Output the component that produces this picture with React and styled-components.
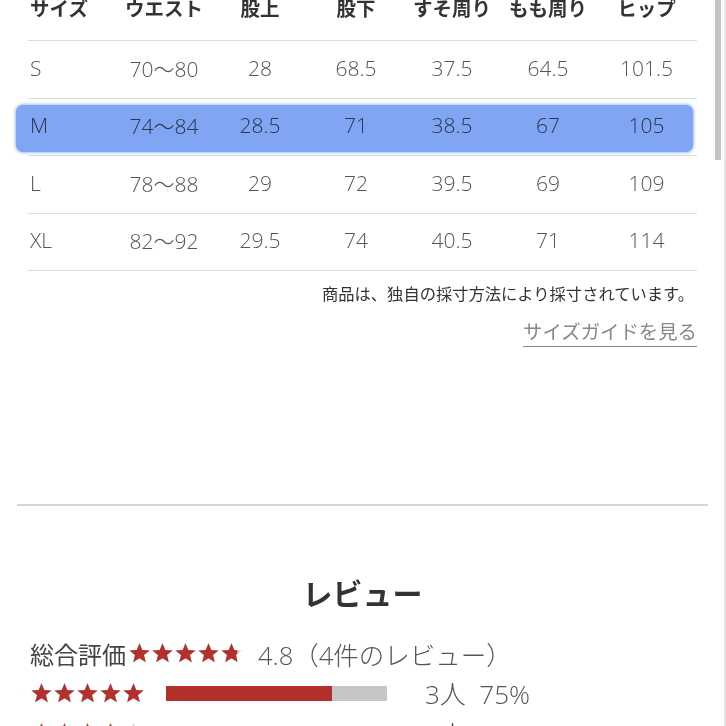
import React from "react";
import styled, { createGlobalStyle } from "styled-components";

const GlobalStyle = createGlobalStyle`
  html, body { margin: 0; padding: 0; background: #fff; }
  body { overflow: hidden; font-family: "Open Sans", "Noto Sans CJK JP", sans-serif; }
`;

const Page = styled.div`
  position: relative;
  width: 726px;
  height: 726px;
  overflow: hidden;
  background: #fff;
`;

const ScrollTrack = styled.div`
  position: absolute;
  top: 0;
  right: 0;
  width: 2px;
  height: 100%;
  background: #e6e6e6;
`;

const ScrollThumb = styled.div`
  position: absolute;
  top: 0;
  right: 5px;
  width: 6px;
  height: 160px;
  background: #c4c4c4;
`;

const Content = styled.div`
  padding: 0 29px 0 28px;
`;

const Table = styled.div`
  margin-top: -16.5px;
`;

const Row = styled.div`
  position: relative;
  display: grid;
  grid-template-columns: 88px repeat(5, 96px) 1fr;
  align-items: center;
  height: 56.5px;
  border-bottom: 1px solid #dcdcdc;
`;

const HeadCell = styled.div`
  font-family: "Noto Sans CJK JP", sans-serif;
  font-weight: 700;
  font-size: 19.5px;
  color: #333;
  text-align: ${(p) => (p.$first ? "left" : "center")};
  padding-left: ${(p) => (p.$first ? "2px" : "0")};
  padding-bottom: 8px;
  white-space: nowrap;
`;

const Cell = styled.div`
  font-family: "Open Sans", "Noto Sans CJK JP", sans-serif;
  font-weight: 300;
  font-size: 21px;
  color: #555;
  text-align: ${(p) => (p.$first ? "left" : "center")};
  padding-left: ${(p) => (p.$first ? "2px" : "0")};
  padding-bottom: 3px;
  white-space: nowrap;
`;

const Marker = styled.div`
  position: absolute;
  left: -12px;
  right: 4px;
  top: 6px;
  bottom: 3px;
  border-radius: 7px;
  background: #80a5f2;
  box-shadow: 0 0 3px 1px rgba(127, 164, 242, 0.7);
  mix-blend-mode: multiply;
  pointer-events: none;
`;

const Note = styled.p`
  margin: 10px 3px 0 0;
  text-align: right;
  font-family: "Noto Sans CJK JP", sans-serif;
  font-size: 16.3px;
  line-height: 24px;
  color: #333;
`;

const GuideLink = styled.a`
  display: block;
  margin-top: 12px;
  text-align: right;
  font-family: "Noto Sans CJK JP", sans-serif;
  font-size: 19.4px;
  line-height: 28px;
  color: #888;
  text-decoration: underline;
  text-underline-offset: 7px;
  text-decoration-thickness: 1px;
`;

const Divider = styled.hr`
  margin: 159px -11px 0 -11px;
  border: none;
  height: 2px;
  background: #d6d6d6;
`;

const Title = styled.h2`
  margin: 66px 0 0;
  text-align: center;
  font-family: "Noto Sans CJK JP", sans-serif;
  font-weight: 700;
  font-size: 30px;
  line-height: 40px;
  color: #333;
`;

const Summary = styled.div`
  display: flex;
  align-items: center;
  margin-top: 25px;
  padding-left: 2px;
  height: 32px;
`;

const Label = styled.span`
  font-family: "Noto Sans CJK JP", sans-serif;
  font-size: 24px;
  color: #444;
  margin-right: 2px;
`;

const Score = styled.span`
  font-family: "Open Sans", "Noto Sans CJK JP", sans-serif;
  font-weight: 300;
  font-size: 25.5px;
  color: #555;
  margin-left: 15px;
  white-space: nowrap;
`;

const Stars = styled.div`
  display: flex;
`;

const DistRow = styled.div`
  display: flex;
  align-items: center;
  height: 32px;
  margin-top: 8px;
  padding-left: 2px;
`;

const Bar = styled.div`
  width: 221px;
  height: 15px;
  background: #c6c6c6;
  margin-left: 21px;
  margin-right: 38px;
`;

const BarFill = styled.div`
  height: 100%;
  background: #b3302c;
`;

const Count = styled.span`
  font-family: "Open Sans", "Noto Sans CJK JP", sans-serif;
  font-weight: 300;
  font-size: 26px;
  color: #555;
  white-space: pre;
`;

const STAR =
  "M11.5 1.2l2.8 6.7 7.3.5-5.6 4.7 1.8 7.1-6.3-3.9-6.3 3.9 1.8-7.1L1.4 8.4l7.3-.5z";

function Star({ fill = 1, id }) {
  return (
    <svg width="23" height="22" viewBox="0 0 23 22">
      <defs>
        <clipPath id={id}>
          <rect x="0" y="0" width={23 * fill} height="22" />
        </clipPath>
      </defs>
      <path d={STAR} fill="#cfcfcf" />
      <path d={STAR} fill="#b3302c" clipPath={`url(#${id})`} />
    </svg>
  );
}

function StarRow({ value, prefix }) {
  return (
    <Stars>
      {[0, 1, 2, 3, 4].map((i) => (
        <Star key={i} id={`${prefix}-${i}`} fill={Math.max(0, Math.min(1, value - i))} />
      ))}
    </Stars>
  );
}

const headers = ["サイズ", "ウエスト", "股上", "股下", "すそ周り", "もも周り", "ヒップ"];
const rows = [
  ["S", "70〜80", "28", "68.5", "37.5", "64.5", "101.5"],
  ["M", "74〜84", "28.5", "71", "38.5", "67", "105"],
  ["L", "78〜88", "29", "72", "39.5", "69", "109"],
  ["XL", "82〜92", "29.5", "74", "40.5", "71", "114"],
];

const dist = [
  { stars: 5, count: "3人", pct: 75 },
  { stars: 4, count: "1人", pct: 25 },
];

export default function App() {
  return (
    <Page>
      <GlobalStyle />
      <Content>
        <Table>
          <Row>
            {headers.map((h, i) => (
              <HeadCell key={h} $first={i === 0}>
                {h}
              </HeadCell>
            ))}
          </Row>
          {rows.map((r) => (
            <Row key={r[0]}>
              {r.map((v, i) => (
                <Cell key={i} $first={i === 0}>
                  {v}
                </Cell>
              ))}
              {r[0] === "M" && <Marker />}
            </Row>
          ))}
        </Table>
        <Note>商品は、独自の採寸方法により採寸されています。</Note>
        <GuideLink>サイズガイドを見る</GuideLink>
        <Divider />
        <Title>レビュー</Title>
        <Summary>
          <Label>総合評価</Label>
          <StarRow value={4.75} prefix="sum" />
          <Score>4.8（4件のレビュー）</Score>
        </Summary>
        {dist.map((d) => (
          <DistRow key={d.stars}>
            <StarRow value={d.stars} prefix={`d${d.stars}`} />
            <Bar>
              <BarFill style={{ width: `${d.pct}%` }} />
            </Bar>
            <Count>{`${d.count}  ${d.pct}%`}</Count>
          </DistRow>
        ))}
      </Content>
      <ScrollThumb />
      <ScrollTrack />
    </Page>
  );
}
